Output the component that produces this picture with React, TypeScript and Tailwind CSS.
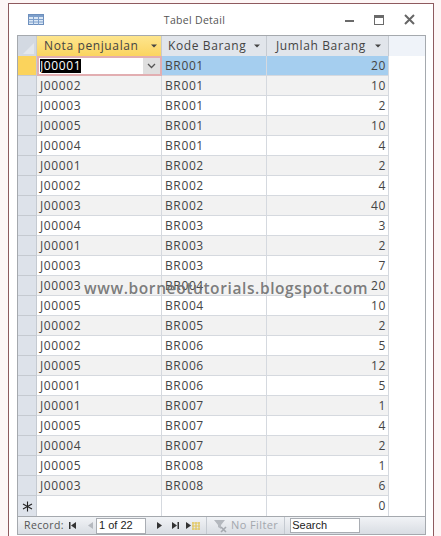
import React from 'react'

const rows: [string, string, number][] = [
  ['J00001', 'BR001', 20],
  ['J00002', 'BR001', 10],
  ['J00003', 'BR001', 2],
  ['J00005', 'BR001', 10],
  ['J00004', 'BR001', 4],
  ['J00001', 'BR002', 2],
  ['J00002', 'BR002', 4],
  ['J00003', 'BR002', 40],
  ['J00004', 'BR003', 3],
  ['J00001', 'BR003', 2],
  ['J00003', 'BR003', 7],
  ['J00003', 'BR004', 20],
  ['J00005', 'BR004', 10],
  ['J00002', 'BR005', 2],
  ['J00002', 'BR006', 5],
  ['J00005', 'BR006', 12],
  ['J00001', 'BR006', 5],
  ['J00001', 'BR007', 1],
  ['J00005', 'BR007', 4],
  ['J00004', 'BR007', 2],
  ['J00005', 'BR008', 1],
  ['J00003', 'BR008', 6],
]

const SortArrow = () => (
  <svg width="6" height="4" viewBox="0 0 6 4" className="shrink-0">
    <path d="M0 0.5h6L3 3.5z" fill="#444" />
  </svg>
)

const HeaderCell = ({ label, className }: { label: string; className: string }) => (
  <div className={`flex h-full items-center justify-between border-r border-[#c5cad1] ${className}`}>
    <span>{label}</span>
    <SortArrow />
  </div>
)

const NavIcon = ({ d, fill = '#333' }: { d: string; fill?: string }) => (
  <svg width="9" height="9" viewBox="0 0 9 9" className="shrink-0">
    <path d={d} fill={fill} />
  </svg>
)

const App: React.FC = () => {
  return (
    <div className="relative h-[536px] w-[441px] overflow-hidden bg-[#fdf6f6] font-['Open_Sans',sans-serif] text-[12px] tracking-[0.62px] text-[#444]">
      <div className="ml-[8px] mt-[3px] flex h-[533px] w-[426px] flex-col border-l border-r border-t border-[#8e5a5e] bg-white">
        {/* title bar */}
        <div className="relative flex h-[31px] shrink-0 items-center pl-[19px] pr-[18px]">
          <svg width="16" height="11" viewBox="0 0 16 11" className="mb-[1px] shrink-0">
            <rect x="0.5" y="0.5" width="15" height="10" fill="#dbe7f5" stroke="#6d8fbd" />
            <rect x="1" y="1" width="14" height="2" fill="#7d9fcb" />
            <path d="M0.5 5.5h15M0.5 8h15M5.5 3v8M10.5 3v8" stroke="#7d9fcb" />
          </svg>
          <div className="mt-[2px] flex-1 text-center text-[10.5px] tracking-[0.3px] text-[#555]">
            Tabel Detail
          </div>
          <div className="flex items-center gap-[20px]">
            <div className="mt-[3px] h-[2px] w-[9px] bg-[#6a6a6a]" />
            <div className="h-[10px] w-[10px] border border-t-[3px] border-[#6a6a6a]" />
            <svg width="11" height="11" viewBox="0 0 11 11">
              <path d="M1 1l9 9M10 1l-9 9" stroke="#666" strokeWidth="2" />
            </svg>
          </div>
        </div>

        {/* datasheet */}
        <div className="ml-[8px] flex w-[409px] flex-col border-l border-r border-t border-[#a5a9ae] bg-white">
          <div className="flex h-[20px] shrink-0 bg-[#eff3f9]">
            <div className="relative w-[19px] shrink-0 border-r border-[#c5cad1] bg-[#d3d9e2]">
              <div className="absolute bottom-[2px] right-[2px] h-0 w-0 border-b-[11px] border-l-[11px] border-b-[#e3e7ed] border-l-transparent" />
            </div>
            <HeaderCell
              label="Nota penjualan"
              className="w-[125px] bg-gradient-to-b from-[#fde58d] to-[#fbd45f] pl-[7px] pr-[4px]"
            />
            <HeaderCell label="Kode Barang" className="w-[105px] bg-[#e1e5eb] pl-[6px] pr-[6px]" />
            <HeaderCell label="Jumlah Barang" className="w-[122px] bg-[#e1e5eb] pl-[9px] pr-[7px]" />
          </div>

          {rows.map(([nota, kode, jumlah], i) => {
            const selected = i === 0
            const alt = i % 2 === 1
            return (
              <div key={i} className="flex h-[20px] shrink-0">
                <div
                  className={`w-[19px] shrink-0 border-b border-r border-[#c5cad1] ${
                    selected ? 'bg-[#fbd35c]' : 'bg-[#dde2ea]'
                  }`}
                />
                {selected ? (
                  <div className="flex w-[125px] items-center justify-between border-2 border-[#e2aeb1] bg-white pl-[1px]">
                    <span className="bg-black leading-[14px] text-white">{nota}</span>
                    <div className="flex h-full w-[17px] items-center justify-center bg-[#dfdfdf]">
                      <svg width="9" height="6" viewBox="0 0 9 6">
                        <path d="M1 1l3.5 3.5L8 1" fill="none" stroke="#555" strokeWidth="1.3" />
                      </svg>
                    </div>
                  </div>
                ) : (
                  <div
                    className={`flex w-[125px] items-center border-b border-r border-[#d5d9df] pl-[3px] ${
                      alt ? 'bg-[#f2f2f2]' : 'bg-white'
                    }`}
                  >
                    {nota}
                  </div>
                )}
                <div
                  className={`flex w-[105px] items-center border-b border-r border-[#d5d9df] pl-[3px] ${
                    selected ? 'bg-[#a5ceef]' : alt ? 'bg-[#f2f2f2]' : 'bg-white'
                  }`}
                >
                  {kode}
                </div>
                <div
                  className={`flex w-[122px] items-center justify-end border-b border-r border-[#d5d9df] pr-[2px] ${
                    selected ? 'bg-[#a5ceef]' : alt ? 'bg-[#f2f2f2]' : 'bg-white'
                  }`}
                >
                  {jumlah}
                </div>
              </div>
            )
          })}

          {/* new record row */}
          <div className="flex h-[20px] shrink-0">
            <div className="flex w-[19px] shrink-0 items-center justify-center border-r border-[#c5cad1] bg-[#dde2ea]">
              <svg width="11" height="11" viewBox="0 0 11 11">
                <path d="M5.5 0.5v10M1 3l9 5M10 3l-9 5" stroke="#222" strokeWidth="1.1" />
              </svg>
            </div>
            <div className="w-[125px] border-r border-[#d5d9df]" />
            <div className="w-[105px] border-r border-[#d5d9df]" />
            <div className="flex w-[122px] items-center justify-end border-r border-[#d5d9df] pr-[2px]">0</div>
          </div>

          {/* record navigation */}
          <div className="flex h-[19px] shrink-0 items-center border-b border-t border-[#a5a9ae] bg-gradient-to-b from-[#f1f3f6] to-[#d9dde3] pl-[6px] tracking-normal text-[#555]">
            <span className="w-[39px] text-[10.5px] tracking-[0.4px]">Record:</span>
            <div className="ml-[5px] flex items-center">
              <NavIcon d="M1 1h1.5v7H1zM8 1v7L3 4.5z" />
            </div>
            <div className="ml-[9px]">
              <NavIcon d="M7 1v7L2 4.5z" fill="#b5b9bf" />
            </div>
            <div className="ml-[1px] flex h-[16px] w-[50px] items-center border border-[#a9adb3] bg-white pl-[2px] font-['Liberation_Sans',sans-serif] text-[11px] text-[#222]">
              1 of 22
            </div>
            <div className="ml-[9px]">
              <NavIcon d="M2 1v7l5-3.5z" />
            </div>
            <div className="ml-[7px]">
              <NavIcon d="M1 1v7l5-3.5zM6.5 1H8v7H6.5z" />
            </div>
            <div className="ml-[5px] flex items-center">
              <NavIcon d="M1 1v7l5-3.5z" />
              <svg width="8" height="8" viewBox="0 0 8 8" className="-ml-[2px] shrink-0">
                <path d="M0 1h8M0 4h8M0 7h8M1 0v8M4 0v8M7 0v8" stroke="#e3c65a" strokeWidth="1.2" />
              </svg>
            </div>
            <div className="ml-[6px] flex h-full items-center border-l border-[#c5cad1] pl-[7px] text-[11px] tracking-[0.4px] text-[#a3a7ad]">
              <svg width="14" height="14" viewBox="0 0 14 14" className="mr-[3px] shrink-0">
                <path d="M0 1h11L7 6v4L4 8V6z" fill="#b4b8be" />
                <path d="M7 8l5 5M12 8l-5 5" stroke="#a5a9af" strokeWidth="1.6" />
              </svg>
              No Filter
            </div>
            <div className="ml-[6px] flex h-full items-center border-l border-[#c5cad1] pl-[5px]">
              <div className="flex h-[15px] w-[70px] items-center border border-[#a9adb3] bg-white pl-[1px] font-['Liberation_Sans',sans-serif] text-[11px] text-[#222]">
                Search
              </div>
            </div>
          </div>
        </div>
      </div>

      {/* watermark over the sheet */}
      <div className="absolute left-[84px] top-[278px] whitespace-nowrap text-[15.5px] font-semibold leading-[20px] tracking-[0.6px] text-[#6d6d6d]/90">
        www.borneotutorials.blogspot.com
      </div>
    </div>
  )
}

export default App
